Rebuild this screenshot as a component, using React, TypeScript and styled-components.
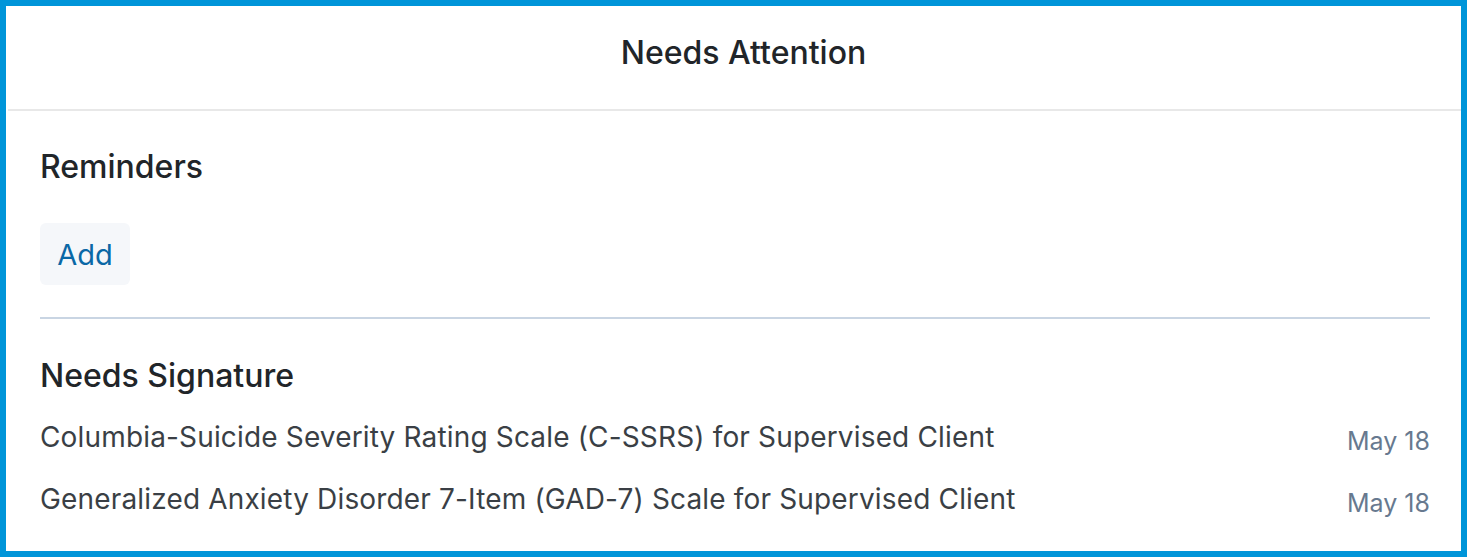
import React from "react";
import styled, { createGlobalStyle } from "styled-components";

const Global = createGlobalStyle`
  html, body { margin: 0; padding: 0; background: #ffffff; }
  body { font-family: Inter, "Noto Sans", sans-serif; -webkit-font-smoothing: antialiased; }
  * { box-sizing: border-box; }
`;

const Panel = styled.div`
  width: 1467px;
  height: 557px;
  border: 6px solid #0095d9;
  background: #ffffff;
  display: flex;
  flex-direction: column;
  overflow: hidden;
`;

const Header = styled.header`
  height: 105px;
  margin-left: 2px;
  padding-top: 27px;
  padding-left: 18px;
  border-bottom: 2px solid #e8e8e8;
  display: flex;
  justify-content: center;
  align-items: flex-start;
`;

const Title = styled.h1`
  margin: 0;
  font-size: 32px;
  line-height: 40px;
  font-weight: 500;
  color: #212529;
`;

const Body = styled.div`
  padding: 36px 31px 0 34px;
  display: flex;
  flex-direction: column;
`;

const SectionTitle = styled.h2`
  margin: 0;
  font-size: 32px;
  line-height: 40px;
  font-weight: 500;
  color: #212529;
`;

const AddButton = styled.button`
  margin-top: 36px;
  width: 90px;
  height: 62px;
  border: none;
  border-radius: 6px;
  background: #f5f7fa;
  color: #0a68a6;
  font-family: Inter, "Noto Sans", sans-serif;
  font-size: 29px;
  font-weight: 400;
  padding: 0;
  align-self: flex-start;
  cursor: pointer;
`;

const Divider = styled.hr`
  margin: 32px 0 37px;
  border: none;
  height: 2px;
  background: #c9d5e3;
`;

const List = styled.ul`
  list-style: none;
  margin: 10px 0 0;
  padding: 0;
`;

const Row = styled.li`
  height: 62px;
  display: flex;
  justify-content: space-between;
  align-items: center;
`;

const ItemText = styled.span`
  font-size: 28px;
  color: #3a3f45;
  letter-spacing: 0.16px;
`;

const DateText = styled.span`
  font-size: 25px;
  color: #67798f;
  padding-top: 8px;
`;

const items = [
  "Columbia-Suicide Severity Rating Scale (C-SSRS) for Supervised Client",
  "Generalized Anxiety Disorder 7-Item (GAD-7) Scale for Supervised Client",
];

export default function App() {
  return (
    <>
      <Global />
      <Panel>
        <Header>
          <Title>Needs Attention</Title>
        </Header>
        <Body>
          <SectionTitle>Reminders</SectionTitle>
          <AddButton>Add</AddButton>
          <Divider />
          <SectionTitle>Needs Signature</SectionTitle>
          <List>
            {items.map((t) => (
              <Row key={t}>
                <ItemText>{t}</ItemText>
                <DateText>May 18</DateText>
              </Row>
            ))}
          </List>
        </Body>
      </Panel>
    </>
  );
}
